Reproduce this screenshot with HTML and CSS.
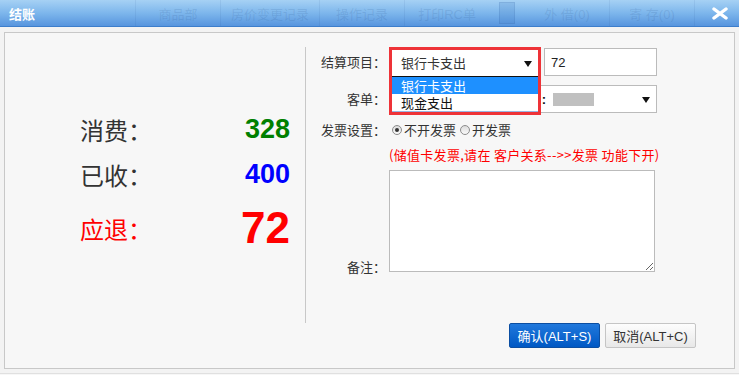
FILE: index.html
```html
<!DOCTYPE html>
<html lang="zh-CN">
<head>
  <meta charset="UTF-8" />
  <meta name="viewport" content="width=device-width, initial-scale=1.0" />
  <title>结账</title>
  <link rel="stylesheet" href="styles.css">
</head>
<body>
  <div class="dialog">
    <div class="titlebar">
      <span class="title">结账</span>
      <div class="tabs">
        <span class="sep"></span><span class="tab">商品部</span>
        <span class="sep"></span><span class="tab">房价变更记录</span>
        <span class="sep"></span><span class="tab">操作记录</span>
        <span class="sep"></span><span class="tab">打印RC单</span>
        <span class="tab-box"></span><span class="tab">外 借(0)</span>
        <span class="sep"></span><span class="tab">寄 存(0)</span>
        <span class="sep"></span>
      </div>
      <span class="close">
        <svg width="18" height="13" viewBox="0 0 18 13">
          <path d="M3 2 L15 11 M15 2 L3 11" stroke="#fff" stroke-width="3.4" stroke-linecap="round" fill="none"/>
        </svg>
      </span>
    </div>

    <div class="dialog-body">
      <div class="panel">
        <div class="summary">
          <div class="sum-row">
            <span class="sum-label">消费：</span>
            <span class="sum-value green">328</span>
          </div>
          <div class="sum-row">
            <span class="sum-label">已收：</span>
            <span class="sum-value blue">400</span>
          </div>
          <div class="sum-row sum-row-big">
            <span class="sum-label red">应退：</span>
            <span class="sum-value sum-value-big red">72</span>
          </div>
        </div>

        <div class="divider"></div>

        <div class="form">
          <div class="form-row row-item">
            <label class="form-label">结算项目：</label>
            <div class="combo">
              <div class="select select-open">银行卡支出<i class="caret"></i></div>
              <ul class="dropdown">
                <li class="active">银行卡支出</li>
                <li>现金支出</li>
              </ul>
            </div>
            <input class="text-input" type="text" value="72">
          </div>

          <div class="form-row row-guest">
            <label class="form-label">客单：</label>
            <div class="select select-guest">
              <span class="guest-prefix">:</span>
              <span class="mask"></span>
              <i class="caret"></i>
            </div>
          </div>

          <div class="form-row row-invoice">
            <label class="form-label">发票设置：</label>
            <div class="radios">
              <span class="radio checked"></span><span class="radio-text">不开发票</span>
              <span class="radio"></span><span class="radio-text">开发票</span>
            </div>
          </div>

          <div class="form-row row-note">
            <span class="form-label"></span>
            <span class="note">(储值卡发票,请在 客户关系--&gt;&gt;发票 功能下开)</span>
          </div>

          <div class="form-row row-remark">
            <label class="form-label label-bottom">备注：</label>
            <textarea class="remark"></textarea>
          </div>

          <div class="actions">
            <button class="btn btn-primary">确认(ALT+S)</button>
            <button class="btn">取消(ALT+C)</button>
          </div>
        </div>
      </div>
    </div>
  </div>
</body>
</html>
```

FILE: styles.css
```css
html, body {
  margin: 0;
  padding: 0;
}
body {
  width: 739px;
  height: 375px;
  overflow: hidden;
  background: #f7f7f7;
  font-family: "Liberation Sans", "Noto Sans CJK SC", sans-serif;
  font-size: 13px;
  color: #333;
}

/* Title bar */
.titlebar {
  height: 26px;
  display: flex;
  align-items: center;
  background: linear-gradient(#a6d1f4, #7db6ec 50%, #5795de);
  border-bottom: 1px solid #3d7ecb;
  overflow: hidden;
}
.title {
  width: 126px;
  flex-shrink: 0;
  padding-left: 9px;
  color: #fff;
  font-weight: bold;
  font-size: 13px;
}
.tabs {
  flex: 1;
  min-width: 0;
  display: flex;
  align-items: center;
  height: 26px;
  overflow: hidden;
  white-space: nowrap;
}
.tab {
  min-width: 64px;
  padding: 0 10px;
  text-align: center;
  color: rgba(30, 70, 130, 0.14);
  font-size: 13px;
}
.sep {
  width: 1px;
  height: 26px;
  background: rgba(30, 70, 130, 0.08);
  flex-shrink: 0;
}
.tab-box {
  width: 14px;
  height: 20px;
  margin: 0 10px;
  flex-shrink: 0;
  background: rgba(40, 100, 180, 0.15);
  border: 1px solid rgba(30, 70, 130, 0.1);
}
.close {
  width: 18px;
  height: 13px;
  margin: 0 10px 0 4px;
  flex-shrink: 0;
  display: flex;
}

/* Body */
.dialog-body {
  height: 339px;
  padding: 5px 4px 2px 4px;
  background: #f3f3f3;
  border-bottom: 1px solid #e0e0e0;
}
.panel {
  height: 335px;
  display: flex;
  background: #f7f7f7;
  border: 1px solid #c8c8c8;
}

/* Summary */
.summary {
  width: 300px;
  box-sizing: border-box;
  padding: 74px 15px 0 75px;
}
.sum-row {
  height: 45px;
  display: flex;
  align-items: center;
  justify-content: space-between;
}
.sum-row-big {
  height: 56px;
  margin-top: 3px;
}
.sum-label {
  font-family: "Noto Sans CJK SC", sans-serif;
  font-size: 24px;
  color: #333;
}
.sum-value {
  font-family: "Liberation Sans", sans-serif;
  font-weight: bold;
  font-size: 27px;
}
.sum-value-big {
  font-size: 44px;
}
.green { color: #008000; }
.blue { color: #0000ff; }
.red { color: #ff0000; }

.divider {
  width: 1px;
  height: 276px;
  margin-top: 14px;
  background: #c8c8c8;
  flex-shrink: 0;
}

/* Form */
.form {
  flex: 1;
  padding-top: 14px;
}
.form-row {
  display: flex;
  align-items: center;
  gap: 3px;
}
.form-label {
  width: 80px;
  flex-shrink: 0;
  text-align: right;
  font-family: "Noto Sans CJK SC", sans-serif;
  font-size: 13px;
  line-height: 18px;
  color: #333;
}
.row-item { height: 30px; }
.row-guest { height: 28px; margin-top: 8px; }
.row-invoice { height: 20px; margin-top: 7px; }
.row-note { height: 18px; margin-top: 6px; }
.row-remark { margin-top: 6px; }

.combo {
  position: relative;
  width: 152px;
  height: 30px;
  box-sizing: border-box;
  border: 3px solid #ee3338;
  border-bottom: 0;
  align-self: flex-start;
}
.select {
  position: relative;
  background: #fff;
  box-sizing: border-box;
}
.select-open {
  height: 27px;
  line-height: 26px;
  padding-left: 9px;
  border-bottom: 1px solid #111;
  font-family: "Noto Sans CJK SC", sans-serif;
}
.caret {
  position: absolute;
  right: 6px;
  top: 50%;
  margin-top: -2px;
  border-left: 4px solid transparent;
  border-right: 4px solid transparent;
  border-top: 6px solid #111;
}
.dropdown {
  position: absolute;
  top: 100%;
  left: -3px;
  right: -3px;
  margin: 0;
  padding: 0 0 1px;
  list-style: none;
  background: #fff;
  border: 3px solid #ee3338;
  border-top: 0;
  box-shadow: inset 0 -1px 0 #9ab6e2;
  z-index: 2;
}
.dropdown li {
  height: 17px;
  line-height: 17px;
  padding-left: 9px;
  font-family: "Noto Sans CJK SC", sans-serif;
  color: #111;
}
.dropdown li.active {
  background: #1e90ff;
  color: #fff;
}
.text-input {
  width: 113px;
  height: 28px;
  box-sizing: border-box;
  margin: 0;
  padding: 0 6px;
  border: 1px solid #bbb;
  background: #fff;
  font-family: "Liberation Sans", sans-serif;
  font-size: 13px;
  color: #222;
  outline: none;
}

.select-guest {
  width: 268px;
  height: 28px;
  display: flex;
  align-items: center;
  border: 1px solid #bbb;
}
.guest-prefix {
  width: 156px;
  text-align: right;
  font-weight: bold;
  color: #111;
}
.mask {
  width: 41px;
  height: 13px;
  margin-left: 7px;
  background: #c0c0c0;
}

.radios {
  display: flex;
  align-items: center;
  margin-left: 3px;
  font-family: "Noto Sans CJK SC", sans-serif;
}
.radio {
  position: relative;
  width: 10px;
  height: 10px;
  box-sizing: border-box;
  border: 1px solid #8c8c8c;
  border-radius: 50%;
  background: linear-gradient(#dcdcdc, #fafafa);
}
.radio.checked::after {
  content: "";
  position: absolute;
  left: 2px;
  top: 2px;
  width: 4px;
  height: 4px;
  border-radius: 50%;
  background: #333;
}
.radio-text {
  margin: 0 4px 0 2px;
  line-height: 18px;
}

.note {
  color: #ff0000;
  font-family: "Noto Sans CJK SC", sans-serif;
  font-size: 13px;
  line-height: 18px;
  letter-spacing: 0.3px;
  white-space: nowrap;
}

.label-bottom {
  align-self: flex-end;
  line-height: 16px;
  margin-bottom: -3px;
}
.remark {
  width: 266px;
  height: 102px;
  box-sizing: border-box;
  margin: 0;
  border: 1px solid #bbb;
  background: #fff;
  outline: none;
}

.actions {
  display: flex;
  justify-content: flex-end;
  gap: 5px;
  margin-top: 51px;
  padding-right: 38px;
}
.btn {
  width: 91px;
  height: 25px;
  margin: 0;
  padding: 0;
  border: 1px solid #c5c5c5;
  border-radius: 2px;
  background: linear-gradient(#fdfdfd, #e8e8e8);
  font-family: "Liberation Sans", "Noto Sans CJK SC", sans-serif;
  font-size: 13px;
  color: #333;
}
.btn-primary {
  border-color: #0b4ea2;
  background: linear-gradient(#2078dc, #0058c4);
  color: #fff;
}
```
